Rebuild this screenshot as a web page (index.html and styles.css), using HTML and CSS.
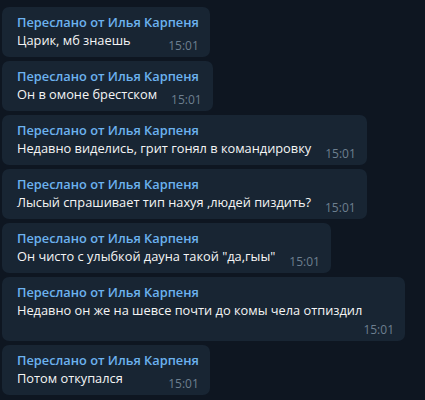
FILE: index.html
```html
<!DOCTYPE html>
<html lang="ru">
<head>
  <meta charset="UTF-8">
  <meta name="viewport" content="width=device-width, initial-scale=1.0">
  <title>Чат</title>
  <link rel="stylesheet" href="styles.css">
</head>
<body>
  <div class="chat">
    <div class="bubble">
      <div class="fwd">Переслано от Илья Карпеня</div>
      <div class="body">
        <span class="text">Царик, мб знаешь</span>
        <span class="time">15:01</span>
      </div>
    </div>
    <div class="bubble">
      <div class="fwd">Переслано от Илья Карпеня</div>
      <div class="body">
        <span class="text">Он в омоне брестском</span>
        <span class="time">15:01</span>
      </div>
    </div>
    <div class="bubble">
      <div class="fwd">Переслано от Илья Карпеня</div>
      <div class="body">
        <span class="text">Недавно виделись, грит гонял в командировку</span>
        <span class="time">15:01</span>
      </div>
    </div>
    <div class="bubble">
      <div class="fwd">Переслано от Илья Карпеня</div>
      <div class="body">
        <span class="text">Лысый спрашивает тип нахуя ,людей пиздить?</span>
        <span class="time">15:01</span>
      </div>
    </div>
    <div class="bubble">
      <div class="fwd">Переслано от Илья Карпеня</div>
      <div class="body">
        <span class="text">Он чисто с улыбкой дауна такой "да,гыы"</span>
        <span class="time">15:01</span>
      </div>
    </div>
    <div class="bubble">
      <div class="fwd">Переслано от Илья Карпеня</div>
      <div class="body">
        <span class="text">Недавно он же на шевсе почти до комы чела отпиздил</span>
        <span class="time">15:01</span>
      </div>
    </div>
    <div class="bubble">
      <div class="fwd">Переслано от Илья Карпеня</div>
      <div class="body">
        <span class="text">Потом откупался</span>
        <span class="time">15:01</span>
      </div>
    </div>
  </div>
</body>
</html>
```

FILE: styles.css
```css
body {
  margin: 0;
  background-color: #0e1621;
  font-family: 'Open Sans', 'Noto Sans', sans-serif;
  color: #f5f5f5;
}
.chat {
  display: flex;
  flex-direction: column;
  align-items: flex-start;
  gap: 4px;
  padding: 7px 2px;
}
.bubble {
  background-color: #182533;
  border-radius: 7px;
  padding: 6px 11px 7px 15px;
  max-width: 377px;
}
.fwd {
  color: #6cb2ef;
  font-size: 12.8px;
  font-weight: 600;
  line-height: 18px;
  white-space: nowrap;
}
.body {
  display: flex;
  flex-wrap: wrap;
  align-items: flex-end;
  column-gap: 14px;
}
.text {
  font-size: 12.8px;
  line-height: 19px;
}
.time {
  margin-left: auto;
  margin-bottom: -5px;
  font-size: 12px;
  line-height: 19px;
  color: #6d7f8f;
}
```
